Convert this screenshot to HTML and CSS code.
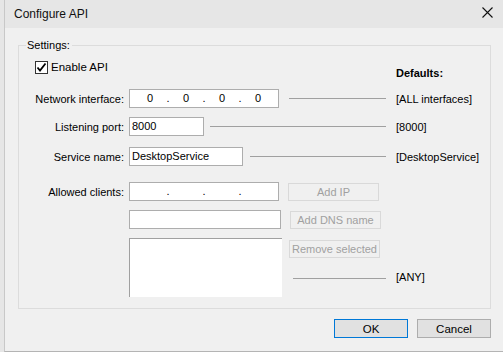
FILE: index.html
```html
<!DOCTYPE html>
<html lang="en">
<head>
  <meta charset="UTF-8" />
  <meta name="viewport" content="width=device-width, initial-scale=1.0"/>
  <title>Configure API</title>
  <link rel="stylesheet" href="styles.css">
</head>
<body>
  <div class="window">
    <div class="titlebar">
      <span class="title">Configure API</span>
      <svg class="close" width="11" height="11" viewBox="0 0 11 11">
        <path d="M0.5 0.5 L10.5 10.5 M10.5 0.5 L0.5 10.5" stroke="#111" stroke-width="1.1" fill="none"/>
      </svg>
    </div>

    <div class="content">
      <fieldset class="group">
        <legend>Settings:</legend>

        <div class="row row-check">
          <label class="check">
            <span class="box">
              <svg width="11" height="11" viewBox="0 0 11 11">
                <path d="M1.5 5.5 L4 8.5 L9.5 1.5" stroke="#000" stroke-width="1.8" fill="none"/>
              </svg>
            </span>
            Enable API
          </label>
          <span class="defaults-head">Defaults:</span>
        </div>

        <div class="row row-net">
          <span class="label">Network interface:</span>
          <div class="field">
            <div class="edit ip">
              <span class="seg">0</span><span class="dot">.</span><span class="seg">0</span><span class="dot">.</span><span class="seg">0</span><span class="dot">.</span><span class="seg">0</span>
            </div>
            <span class="rule rule-net"></span>
          </div>
          <span class="default">[ALL interfaces]</span>
        </div>

        <div class="row row-port">
          <span class="label">Listening port:</span>
          <div class="field">
            <div class="edit port">8000</div>
            <span class="rule rule-port"></span>
          </div>
          <span class="default">[8000]</span>
        </div>

        <div class="row row-service">
          <span class="label">Service name:</span>
          <div class="field">
            <div class="edit service">DesktopService</div>
            <span class="rule rule-service"></span>
          </div>
          <span class="default">[DesktopService]</span>
        </div>

        <div class="row row-clients">
          <span class="label">Allowed clients:</span>
          <div class="field">
            <div class="edit ip">
              <span class="seg"></span><span class="dot">.</span><span class="seg"></span><span class="dot">.</span><span class="seg"></span><span class="dot">.</span><span class="seg"></span>
            </div>
            <button class="btn btn-side" disabled>Add IP</button>
          </div>
        </div>

        <div class="row row-dns">
          <span class="label"></span>
          <div class="field">
            <div class="edit dns"></div>
            <button class="btn btn-side" disabled>Add DNS name</button>
          </div>
        </div>

        <div class="row row-list">
          <span class="label"></span>
          <div class="field field-list">
            <div class="listbox"></div>
            <div class="list-side">
              <button class="btn btn-side" disabled>Remove selected</button>
              <span class="rule rule-any"></span>
            </div>
          </div>
          <span class="default default-any">[ANY]</span>
        </div>
      </fieldset>

      <div class="actions">
        <button class="btn btn-dialog btn-default">OK</button>
        <button class="btn btn-dialog">Cancel</button>
      </div>
    </div>
  </div>
</body>
</html>
```

FILE: styles.css
```css
body {
  margin: 0;
  background: #ffffff;
  font-family: "Liberation Sans", Arial, sans-serif;
  font-size: 11px;
  color: #000;
}

.window {
  height: 352px;
  box-sizing: border-box;
  margin-left: 4px;
  background: #f0f0f0;
  border-left: 1px solid #c8c8c8;
  border-bottom: 1px solid #b4b4b4;
  box-shadow: -4px 0 0 #e6e6e6;
}

.titlebar {
  height: 28px;
  background: #e6e6e6;
  display: flex;
  align-items: center;
  justify-content: space-between;
  padding: 0 10px 0 9px;
}

.title {
  font-size: 12px;
  color: #111;
  padding-bottom: 1px;
}

.close {
  margin-bottom: 4px;
}

.content {
  padding-top: 10px;
}

.group {
  margin: 0 12px 0 13px;
  padding: 0 0 11px 0;
  border: 1px solid #dcdcdc;
}

.group legend {
  margin-left: 7px;
  padding: 0 2px 0 1px;
  line-height: 14px;
}

.row {
  display: grid;
  grid-template-columns: 105px 257px 1fr;
  column-gap: 5px;
  align-items: center;
  height: 19px;
}

.label {
  text-align: right;
}

.field {
  display: flex;
  align-items: center;
}

.default {
  padding-left: 5px;
}

/* checkbox row */
.row-check {
  margin-top: 8px;
  height: 14px;
}

.check {
  grid-column: 1 / 3;
  display: flex;
  align-items: center;
  margin-left: 16px;
  font-size: 11.5px;
}

.box {
  width: 11px;
  height: 11px;
  border: 1px solid #333;
  background: #fff;
  margin-right: 3px;
  display: flex;
}

.defaults-head {
  font-weight: bold;
  padding-left: 5px;
  align-self: end;
  margin-bottom: -5px;
}

.row-net { margin-top: 15px; }
.row-port { margin-top: 9px; }
.row-service { margin-top: 11px; }
.row-clients { margin-top: 16px; }
.row-dns { margin-top: 9px; }
.row-list { margin-top: 9px; height: 59px; align-items: start; }

/* edit boxes */
.edit {
  height: 19px;
  box-sizing: border-box;
  background: #fff;
  border: 1px solid #adadad;
  padding-left: 2px;
  line-height: 17px;
  font-size: 11px;
}

.ip {
  width: 150px;
  display: flex;
  padding-left: 6px;
}

.seg {
  width: 28px;
  text-align: center;
}

.dot {
  width: 8px;
  text-align: center;
  color: #000;
}

.port { width: 75px; }
.service { width: 114px; }
.dns { width: 152px; }

.rule {
  flex: 1;
  height: 1px;
  background: #a0a0a0;
}

.rule-net { margin-left: 10px; }
.rule-port { margin-left: 6px; }
.rule-service { margin-left: 7px; }

/* list */
.field-list {
  align-items: start;
}

.listbox {
  width: 153px;
  height: 59px;
  box-sizing: border-box;
  background: #fff;
  border-top: 1px solid #a0a0a0;
  border-left: 1px solid #a0a0a0;
}

.list-side {
  display: flex;
  flex-direction: column;
  margin-left: 7px;
  flex: 1;
}

.rule-any {
  flex: none;
  margin: 20px 0 0 4px;
}

.default-any {
  margin-top: 33px;
}

/* buttons */
.btn {
  font-family: "Liberation Sans", Arial, sans-serif;
  font-size: 11.5px;
  padding: 0;
  white-space: nowrap;
  box-sizing: border-box;
  background: #e1e1e1;
  border: 1px solid #adadad;
  color: #000;
}

.btn-side {
  width: 91px;
  height: 18px;
  margin-left: 9px;
  font-size: 11px;
  background: #f0f0f0;
  border-color: #d9d9d9;
  color: #a0a0a0;
}

.list-side .btn-side {
  margin: 2px 0 0 0;
}

.actions {
  display: flex;
  justify-content: flex-end;
  gap: 9px;
  margin: 10px 12px 0 0;
}

.btn-dialog {
  width: 74px;
  height: 19px;
}

.btn-default {
  border-color: #0078d7;
}
```
